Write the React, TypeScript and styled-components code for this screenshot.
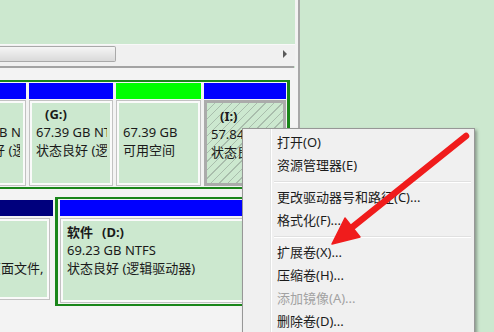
import React from "react";
import styled, { createGlobalStyle } from "styled-components";

const GREEN = "#cce8cf";
const FRAME_GREEN = "#1a861a";

const Global = createGlobalStyle`
  html, body { margin: 0; padding: 0; }
  body {
    width: 494px;
    height: 332px;
    overflow: hidden;
    background: ${GREEN};
    font-family: "Noto Sans", "Noto Sans CJK SC", sans-serif;
    font-size: 13px;
    color: #1a1a1a;
  }
  * { box-sizing: border-box; }
`;

const Page = styled.div`
  position: relative;
  width: 494px;
  height: 332px;
  overflow: hidden;
  display: flex;
`;

const Window = styled.div`
  width: 298px;
  height: 100%;
  flex-shrink: 0;
  display: flex;
  flex-direction: column;
  border-right: 3px solid #f3f3f3;
  box-shadow: 2px 0 0 #a8a8a8;
  overflow: hidden;
`;

const ListPane = styled.div`
  height: 44px;
  flex-shrink: 0;
  background: ${GREEN};
`;

const HScroll = styled.div`
  height: 22px;
  flex-shrink: 0;
  display: flex;
  align-items: flex-start;
  padding-top: 1px;
  background: #f0f0f0;
  border-top: 1px solid #f8f8f8;
`;

const Thumb = styled.div`
  width: 116px;
  height: 16px;
  background: linear-gradient(#f5f5f5, #d9d9d9);
  border: 1px solid #a9a9a9;
  border-left: none;
  border-radius: 0 2px 2px 0;
`;

const ArrowRight = styled.div`
  margin-left: auto;
  margin-right: 8px;
  margin-top: 4px;
  width: 0;
  height: 0;
  border-top: 4px solid transparent;
  border-bottom: 4px solid transparent;
  border-left: 4px solid #5a5a5a;
`;

const Divider = styled.div`
  height: 2px;
  flex-shrink: 0;
  margin-right: 1px;
  background: #a3a3a3;
`;

const DiskPane = styled.div`
  flex: 1;
  display: flex;
  flex-direction: column;
  align-items: flex-start;
  padding-top: 12px;
  background: #f3f3f3;
  overflow: hidden;
`;

const ExtendedFrame = styled.div<{ $mt?: number }>`
  display: flex;
  align-items: flex-start;
  gap: 3px;
  margin-top: ${(p) => p.$mt ?? 0}px;
  padding: 1px 1px 1px 0;
  border: 2px solid ${FRAME_GREEN};
  border-left: none;
  border-right-width: 3px;
`;

const Row = styled.div`
  display: flex;
  align-items: flex-start;
  gap: 2px;
`;

const FramedD = styled.div`
  display: flex;
  padding: 1px 1px 1px 2px;
  border: 2px solid ${FRAME_GREEN};
  border-left-width: 3px;
`;

const Segment = styled.div<{ $w: number; $ml?: number; $mt?: number }>`
  width: ${(p) => p.$w}px;
  margin-left: ${(p) => p.$ml ?? 0}px;
  margin-top: ${(p) => p.$mt ?? 0}px;
  flex-shrink: 0;
  display: flex;
  flex-direction: column;
  gap: ${(p) => (p.$mt !== undefined ? 2 : 1)}px;
`;

const Header = styled.div<{ $c: string }>`
  height: 16px;
  background: ${(p) => p.$c};
`;

const Box = styled.div<{ $h: number; $sel?: boolean; $mr?: number }>`
  height: ${(p) => p.$h}px;
  margin-right: ${(p) => p.$mr ?? 0}px;
  padding: 4px 5px 0 ${(p) => (p.$sel ? 4 : 6)}px;
  border: ${(p) => (p.$sel ? "3px solid #ababab" : "1px solid #c2c2c2")};
  box-shadow: ${(p) => (p.$sel ? "none" : "inset 0 0 0 2px #fafafa")};
  background: ${(p) =>
    p.$sel
      ? `repeating-linear-gradient(135deg, ${GREEN} 0 5px, #a9bdac 5px 6px)`
      : GREEN};
`;

const Clip = styled.div<{ $shift?: number }>`
  overflow: hidden;
  white-space: nowrap;
  & > div {
    margin-left: ${(p) => p.$shift ?? 0}px;
  }
`;

const Line = styled.div`
  height: 18px;
  line-height: 18px;
`;

const Name = styled.span`
  font-weight: 700;
`;

const Drive = styled.span`
  font-weight: 700;
  margin-left: 9px;
`;

const Menu = styled.div`
  position: absolute;
  left: 242px;
  top: 128px;
  width: 233px;
  padding: 2px;
  border: 1px solid #979797;
  background: linear-gradient(
    to right,
    #f0f0f0 0 27px,
    #e2e3e3 27px 28px,
    #ffffff 28px 29px,
    #f0f0f0 29px
  );
  box-shadow: 2px 2px 3px rgba(60, 60, 60, 0.45);
`;

const Item = styled.div<{ $disabled?: boolean }>`
  height: 23px;
  line-height: 23px;
  padding-left: 32px;
  white-space: nowrap;
  color: ${(p) => (p.$disabled ? "#a2a2a2" : "#1b1b1b")};
`;

const Separator = styled.div`
  height: 0;
  margin: 4px 1px 3px 29px;
  border-top: 1px solid #e0e0e0;
  border-bottom: 1px solid #ffffff;
`;

const Overlay = styled.svg`
  position: absolute;
  left: 0;
  top: 0;
  pointer-events: none;
`;

type Vol = {
  name?: string;
  drive?: string;
  size: string;
  status: string;
};

const VolText: React.FC<{ v: Vol; shift?: number }> = ({ v, shift }) => (
  <Clip $shift={shift}>
    <div>
      <Line>
        {v.drive ? (
          <>
            {v.name ? <Name>{v.name}</Name> : null}
            <Drive>{v.drive}</Drive>
          </>
        ) : (
          "\u00a0"
        )}
      </Line>
      <Line>{v.size}</Line>
      <Line>{v.status}</Line>
    </div>
  </Clip>
);

const menuItems: ({ label: string; disabled?: boolean } | "sep")[] = [
  { label: "打开(O)" },
  { label: "资源管理器(E)" },
  "sep",
  { label: "更改驱动器号和路径(C)..." },
  { label: "格式化(F)..." },
  "sep",
  { label: "扩展卷(X)..." },
  { label: "压缩卷(H)..." },
  { label: "添加镜像(A)...", disabled: true },
  { label: "删除卷(D)..." },
];

export default function App() {
  return (
    <>
      <Global />
      <Page>
        <Window>
          <ListPane />
          <HScroll>
            <Thumb />
            <ArrowRight />
          </HScroll>
          <Divider />
          <DiskPane>
            <ExtendedFrame>
              <Segment $w={80} $ml={-54}>
                <Header $c="#0000ff" />
                <Box $h={86}>
                  <VolText
                    v={{ drive: "(F:)", size: "48.83 GB NTFS", status: "状态良好 (逻辑驱动器)" }}
                  />
                </Box>
              </Segment>
              <Segment $w={84}>
                <Header $c="#0000ff" />
                <Box $h={86}>
                  <VolText
                    v={{ drive: "(G:)", size: "67.39 GB NTFS", status: "状态良好 (逻辑驱动器)" }}
                  />
                </Box>
              </Segment>
              <Segment $w={85}>
                <Header $c="#00ff00" />
                <Box $h={86}>
                  <VolText v={{ size: "67.39 GB", status: "可用空间" }} />
                </Box>
              </Segment>
              <Segment $w={82}>
                <Header $c="#0000ff" />
                <Box $h={86} $sel>
                  <VolText
                    v={{ drive: "(I:)", size: "57.84 GB NTFS", status: "状态良好 (逻辑驱动器)" }}
                  />
                </Box>
              </Segment>
            </ExtendedFrame>

            <Row>
              <Segment $w={197} $ml={-144} $mt={11}>
                <Header $c="#00007d" />
                <Box $h={82} $mr={3}>
                  <VolText
                    v={{
                      drive: "(C:)",
                      size: "100.00 GB NTFS",
                      status: "状态良好 (系统, 启动, 页面文件, 活动, 故障转储, 主分区)",
                    }}
                  />
                </Box>
              </Segment>
              <div style={{ marginTop: 8 }}>
                <FramedD>
                  <Segment $w={226} $mt={0}>
                    <Header $c="#0000ff" />
                    <Box $h={85}>
                      <VolText
                        v={{
                          name: "软件",
                          drive: "(D:)",
                          size: "69.23 GB NTFS",
                          status: "状态良好 (逻辑驱动器)",
                        }}
                      />
                    </Box>
                  </Segment>
                </FramedD>
              </div>
            </Row>
          </DiskPane>
        </Window>

        <Menu>
          {menuItems.map((m, i) =>
            m === "sep" ? (
              <Separator key={i} />
            ) : (
              <Item key={i} $disabled={m.disabled}>
                {m.label}
              </Item>
            )
          )}
        </Menu>

        <Overlay width={494} height={332} viewBox="0 0 494 332">
          <line
            x1={466}
            y1={136}
            x2={350}
            y2={229}
            stroke="#f01c1c"
            strokeWidth={6.5}
            strokeLinecap="round"
          />
          <polygon points="332,244 360,237 345,218" fill="#f01c1c" stroke="#f01c1c" strokeWidth={1.5} strokeLinejoin="round" />
        </Overlay>
      </Page>
    </>
  );
}
